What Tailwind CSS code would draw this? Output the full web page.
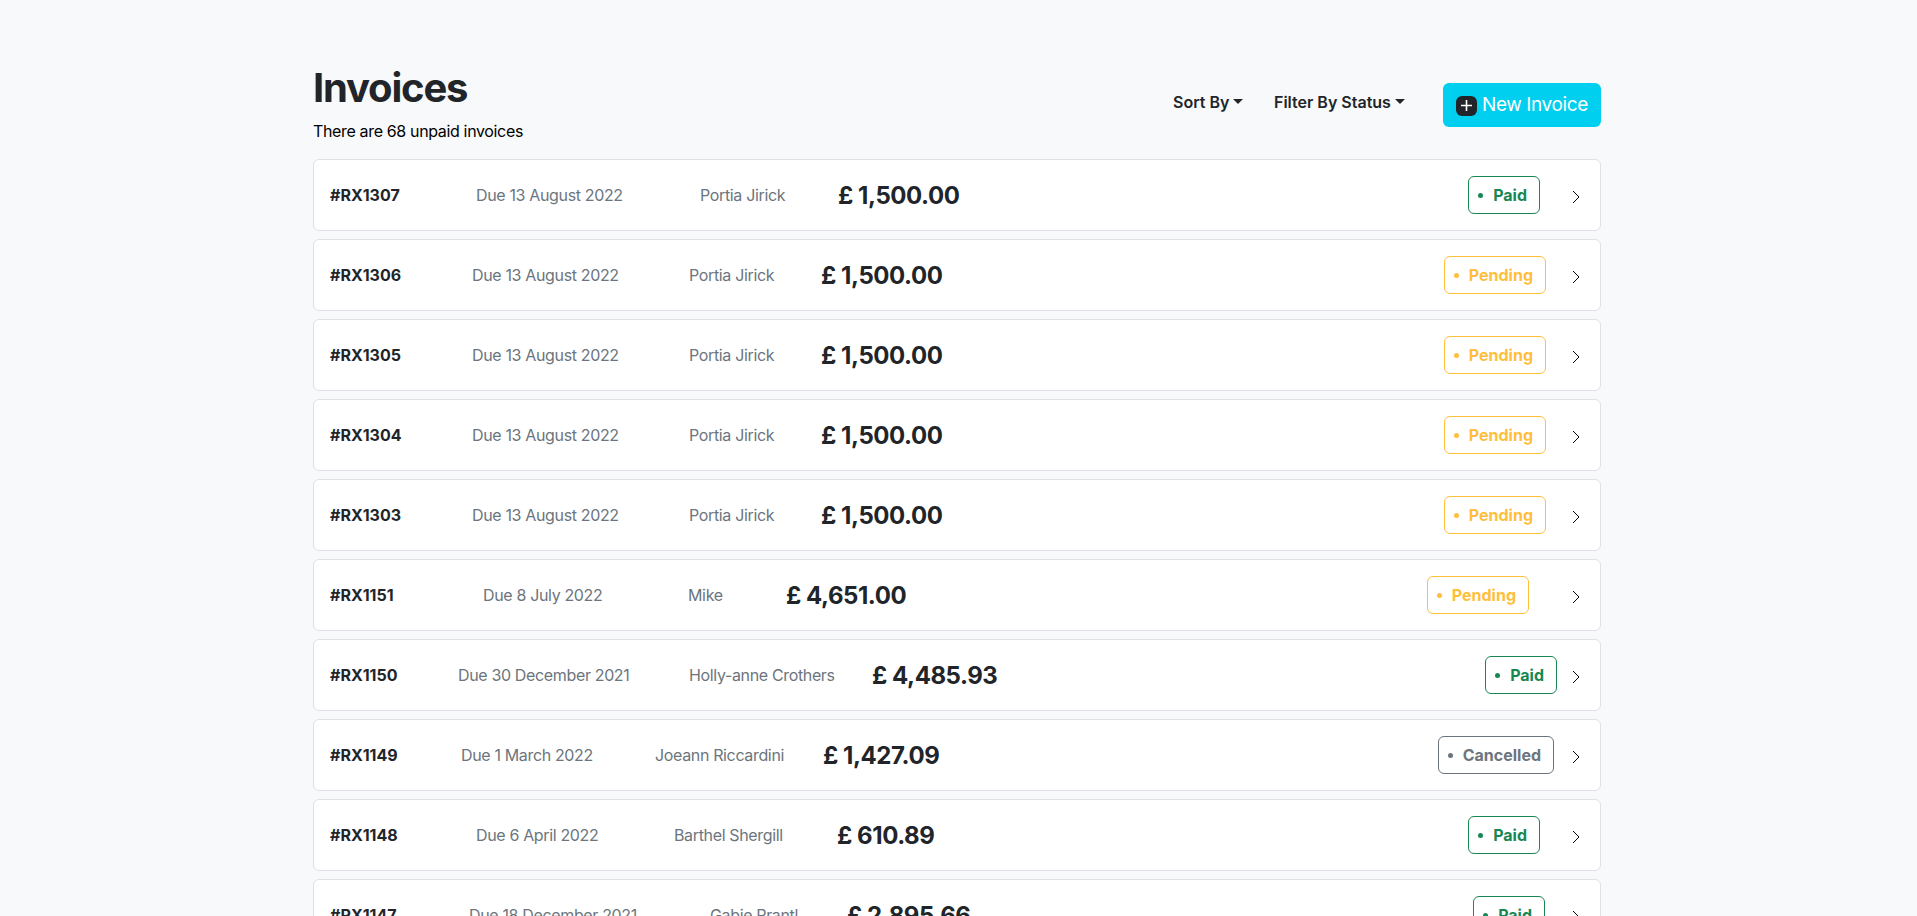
<!DOCTYPE html>
<html lang="en">
<head>
  <meta charset="UTF-8" />
  <title>Invoices</title>
  <script src="https://cdn.jsdelivr.net/npm/@tailwindcss/browser@4"></script>
</head>
<body class="bg-[#f8f9fa] font-['Inter',sans-serif] text-[#212529] tracking-[-0.35px] h-[916px] overflow-hidden">
  <div class="w-[1288px] ml-[313px] pt-[64px]">
    <!-- header -->
    <div class="flex items-start justify-between h-[95px]">
      <div>
        <h1 class="text-[40px] leading-[48px] font-bold tracking-[-1.2px]">Invoices</h1>
        <p class="text-base leading-6 mt-[7px] text-black">There are 68 unpaid invoices</p>
      </div>
      <div class="flex items-center pt-[19px]">
        <button class="flex items-center mb-[7px] font-semibold text-base tracking-normal w-[101px]">Sort By<span class="ml-[4px] border-x-[5px] border-t-[5px] border-x-transparent border-t-[#212529]"></span></button>
        <button class="flex items-center mb-[7px] font-semibold text-base tracking-normal w-[169px]">Filter By Status<span class="ml-[4px] border-x-[5px] border-t-[5px] border-x-transparent border-t-[#212529]"></span></button>
        <button class="flex items-center h-[44px] w-[158px] pl-[13px] bg-[#00cfef] rounded-md text-white text-[19px] tracking-[-0.4px]">
          <span class="flex items-center justify-center w-[21px] h-[20px] mt-px mr-[5px] bg-[#212529] rounded-md">
            <svg width="13" height="13" viewBox="0 0 13 13" fill="none" stroke="white" stroke-width="1.6"><path d="M6.5 1v11M1 6.5h11"/></svg>
          </span>
          New Invoice
        </button>
      </div>
    </div>

    <div class="flex flex-col gap-2">
      <div class="flex items-center h-[72px] bg-white border border-[#dee2e6] rounded-md pl-4">
        <span class="w-[146px] font-bold tracking-normal">#RX1307</span>
        <span class="w-[224px] text-[#6c757d]">Due 13 August 2022</span>
        <span class="w-[138px] text-[#6c757d]">Portia Jirick</span>
        <span class="text-2xl font-bold tracking-[-0.45px] mt-px">£ 1,500.00</span>
        <span class="flex items-center ml-auto mr-[32px] h-[38px] pl-[9px] pr-[12px] border border-[#198754] text-[#198754] rounded-md font-bold tracking-normal"><i class="w-[5px] h-[5px] mr-[10px] rounded-full bg-[#198754]"></i>Paid</span>
        <svg class="mr-[20px] mt-[3px]" width="8" height="14" viewBox="0 0 8 14" fill="none" stroke="#000"><path d="M1 1l6 6-6 6"/></svg>
      </div>
      <div class="flex items-center h-[72px] bg-white border border-[#dee2e6] rounded-md pl-4">
        <span class="w-[142px] font-bold tracking-normal">#RX1306</span>
        <span class="w-[217px] text-[#6c757d]">Due 13 August 2022</span>
        <span class="w-[132px] text-[#6c757d]">Portia Jirick</span>
        <span class="text-2xl font-bold tracking-[-0.45px] mt-px">£ 1,500.00</span>
        <span class="flex items-center ml-auto mr-[26px] h-[38px] pl-[9px] pr-[12px] border border-[#ffbf3c] text-[#ffbf3c] rounded-md font-bold tracking-normal"><i class="w-[5px] h-[5px] mr-[10px] rounded-full bg-[#ffbf3c]"></i>Pending</span>
        <svg class="mr-[20px] mt-[3px]" width="8" height="14" viewBox="0 0 8 14" fill="none" stroke="#000"><path d="M1 1l6 6-6 6"/></svg>
      </div>
      <div class="flex items-center h-[72px] bg-white border border-[#dee2e6] rounded-md pl-4">
        <span class="w-[142px] font-bold tracking-normal">#RX1305</span>
        <span class="w-[217px] text-[#6c757d]">Due 13 August 2022</span>
        <span class="w-[132px] text-[#6c757d]">Portia Jirick</span>
        <span class="text-2xl font-bold tracking-[-0.45px] mt-px">£ 1,500.00</span>
        <span class="flex items-center ml-auto mr-[26px] h-[38px] pl-[9px] pr-[12px] border border-[#ffbf3c] text-[#ffbf3c] rounded-md font-bold tracking-normal"><i class="w-[5px] h-[5px] mr-[10px] rounded-full bg-[#ffbf3c]"></i>Pending</span>
        <svg class="mr-[20px] mt-[3px]" width="8" height="14" viewBox="0 0 8 14" fill="none" stroke="#000"><path d="M1 1l6 6-6 6"/></svg>
      </div>
      <div class="flex items-center h-[72px] bg-white border border-[#dee2e6] rounded-md pl-4">
        <span class="w-[142px] font-bold tracking-normal">#RX1304</span>
        <span class="w-[217px] text-[#6c757d]">Due 13 August 2022</span>
        <span class="w-[132px] text-[#6c757d]">Portia Jirick</span>
        <span class="text-2xl font-bold tracking-[-0.45px] mt-px">£ 1,500.00</span>
        <span class="flex items-center ml-auto mr-[26px] h-[38px] pl-[9px] pr-[12px] border border-[#ffbf3c] text-[#ffbf3c] rounded-md font-bold tracking-normal"><i class="w-[5px] h-[5px] mr-[10px] rounded-full bg-[#ffbf3c]"></i>Pending</span>
        <svg class="mr-[20px] mt-[3px]" width="8" height="14" viewBox="0 0 8 14" fill="none" stroke="#000"><path d="M1 1l6 6-6 6"/></svg>
      </div>
      <div class="flex items-center h-[72px] bg-white border border-[#dee2e6] rounded-md pl-4">
        <span class="w-[142px] font-bold tracking-normal">#RX1303</span>
        <span class="w-[217px] text-[#6c757d]">Due 13 August 2022</span>
        <span class="w-[132px] text-[#6c757d]">Portia Jirick</span>
        <span class="text-2xl font-bold tracking-[-0.45px] mt-px">£ 1,500.00</span>
        <span class="flex items-center ml-auto mr-[26px] h-[38px] pl-[9px] pr-[12px] border border-[#ffbf3c] text-[#ffbf3c] rounded-md font-bold tracking-normal"><i class="w-[5px] h-[5px] mr-[10px] rounded-full bg-[#ffbf3c]"></i>Pending</span>
        <svg class="mr-[20px] mt-[3px]" width="8" height="14" viewBox="0 0 8 14" fill="none" stroke="#000"><path d="M1 1l6 6-6 6"/></svg>
      </div>
      <div class="flex items-center h-[72px] bg-white border border-[#dee2e6] rounded-md pl-4">
        <span class="w-[153px] font-bold tracking-normal">#RX1151</span>
        <span class="w-[205px] text-[#6c757d]">Due 8 July 2022</span>
        <span class="w-[98px] text-[#6c757d]">Mike</span>
        <span class="text-2xl font-bold tracking-[-0.45px] mt-px">£ 4,651.00</span>
        <span class="flex items-center ml-auto mr-[43px] h-[38px] pl-[9px] pr-[12px] border border-[#ffbf3c] text-[#ffbf3c] rounded-md font-bold tracking-normal"><i class="w-[5px] h-[5px] mr-[10px] rounded-full bg-[#ffbf3c]"></i>Pending</span>
        <svg class="mr-[20px] mt-[3px]" width="8" height="14" viewBox="0 0 8 14" fill="none" stroke="#000"><path d="M1 1l6 6-6 6"/></svg>
      </div>
      <div class="flex items-center h-[72px] bg-white border border-[#dee2e6] rounded-md pl-4">
        <span class="w-[128px] font-bold tracking-normal">#RX1150</span>
        <span class="w-[231px] text-[#6c757d]">Due 30 December 2021</span>
        <span class="w-[183px] text-[#6c757d]">Holly-anne Crothers</span>
        <span class="text-2xl font-bold tracking-[-0.45px] mt-px">£ 4,485.93</span>
        <span class="flex items-center ml-auto mr-[15px] h-[38px] pl-[9px] pr-[12px] border border-[#198754] text-[#198754] rounded-md font-bold tracking-normal"><i class="w-[5px] h-[5px] mr-[10px] rounded-full bg-[#198754]"></i>Paid</span>
        <svg class="mr-[20px] mt-[3px]" width="8" height="14" viewBox="0 0 8 14" fill="none" stroke="#000"><path d="M1 1l6 6-6 6"/></svg>
      </div>
      <div class="flex items-center h-[72px] bg-white border border-[#dee2e6] rounded-md pl-4">
        <span class="w-[131px] font-bold tracking-normal">#RX1149</span>
        <span class="w-[194px] text-[#6c757d]">Due 1 March 2022</span>
        <span class="w-[168px] text-[#6c757d]">Joeann Riccardini</span>
        <span class="text-2xl font-bold tracking-[-0.45px] mt-px">£ 1,427.09</span>
        <span class="flex items-center ml-auto mr-[18px] h-[38px] pl-[9px] pr-[12px] border border-[#6c757d] text-[#6c757d] rounded-md font-bold tracking-normal"><i class="w-[5px] h-[5px] mr-[10px] rounded-full bg-[#6c757d]"></i>Cancelled</span>
        <svg class="mr-[20px] mt-[3px]" width="8" height="14" viewBox="0 0 8 14" fill="none" stroke="#000"><path d="M1 1l6 6-6 6"/></svg>
      </div>
      <div class="flex items-center h-[72px] bg-white border border-[#dee2e6] rounded-md pl-4">
        <span class="w-[146px] font-bold tracking-normal">#RX1148</span>
        <span class="w-[198px] text-[#6c757d]">Due 6 April 2022</span>
        <span class="w-[163px] text-[#6c757d]">Barthel Shergill</span>
        <span class="text-2xl font-bold tracking-[-0.45px] mt-px">£ 610.89</span>
        <span class="flex items-center ml-auto mr-[32px] h-[38px] pl-[9px] pr-[12px] border border-[#198754] text-[#198754] rounded-md font-bold tracking-normal"><i class="w-[5px] h-[5px] mr-[10px] rounded-full bg-[#198754]"></i>Paid</span>
        <svg class="mr-[20px] mt-[3px]" width="8" height="14" viewBox="0 0 8 14" fill="none" stroke="#000"><path d="M1 1l6 6-6 6"/></svg>
      </div>
      <div class="flex items-center h-[72px] bg-white border border-[#dee2e6] rounded-md pl-4">
        <span class="w-[139px] font-bold tracking-normal">#RX1147</span>
        <span class="w-[241px] text-[#6c757d]">Due 18 December 2021</span>
        <span class="w-[137px] text-[#6c757d]">Gabie Prantl</span>
        <span class="text-2xl font-bold tracking-[-0.45px] mt-px">£ 2,895.66</span>
        <span class="flex items-center ml-auto mr-[27px] h-[38px] pl-[9px] pr-[12px] border border-[#198754] text-[#198754] rounded-md font-bold tracking-normal"><i class="w-[5px] h-[5px] mr-[10px] rounded-full bg-[#198754]"></i>Paid</span>
        <svg class="mr-[20px] mt-[3px]" width="8" height="14" viewBox="0 0 8 14" fill="none" stroke="#000"><path d="M1 1l6 6-6 6"/></svg>
      </div>
    </div>
  </div>
</body>
</html>
